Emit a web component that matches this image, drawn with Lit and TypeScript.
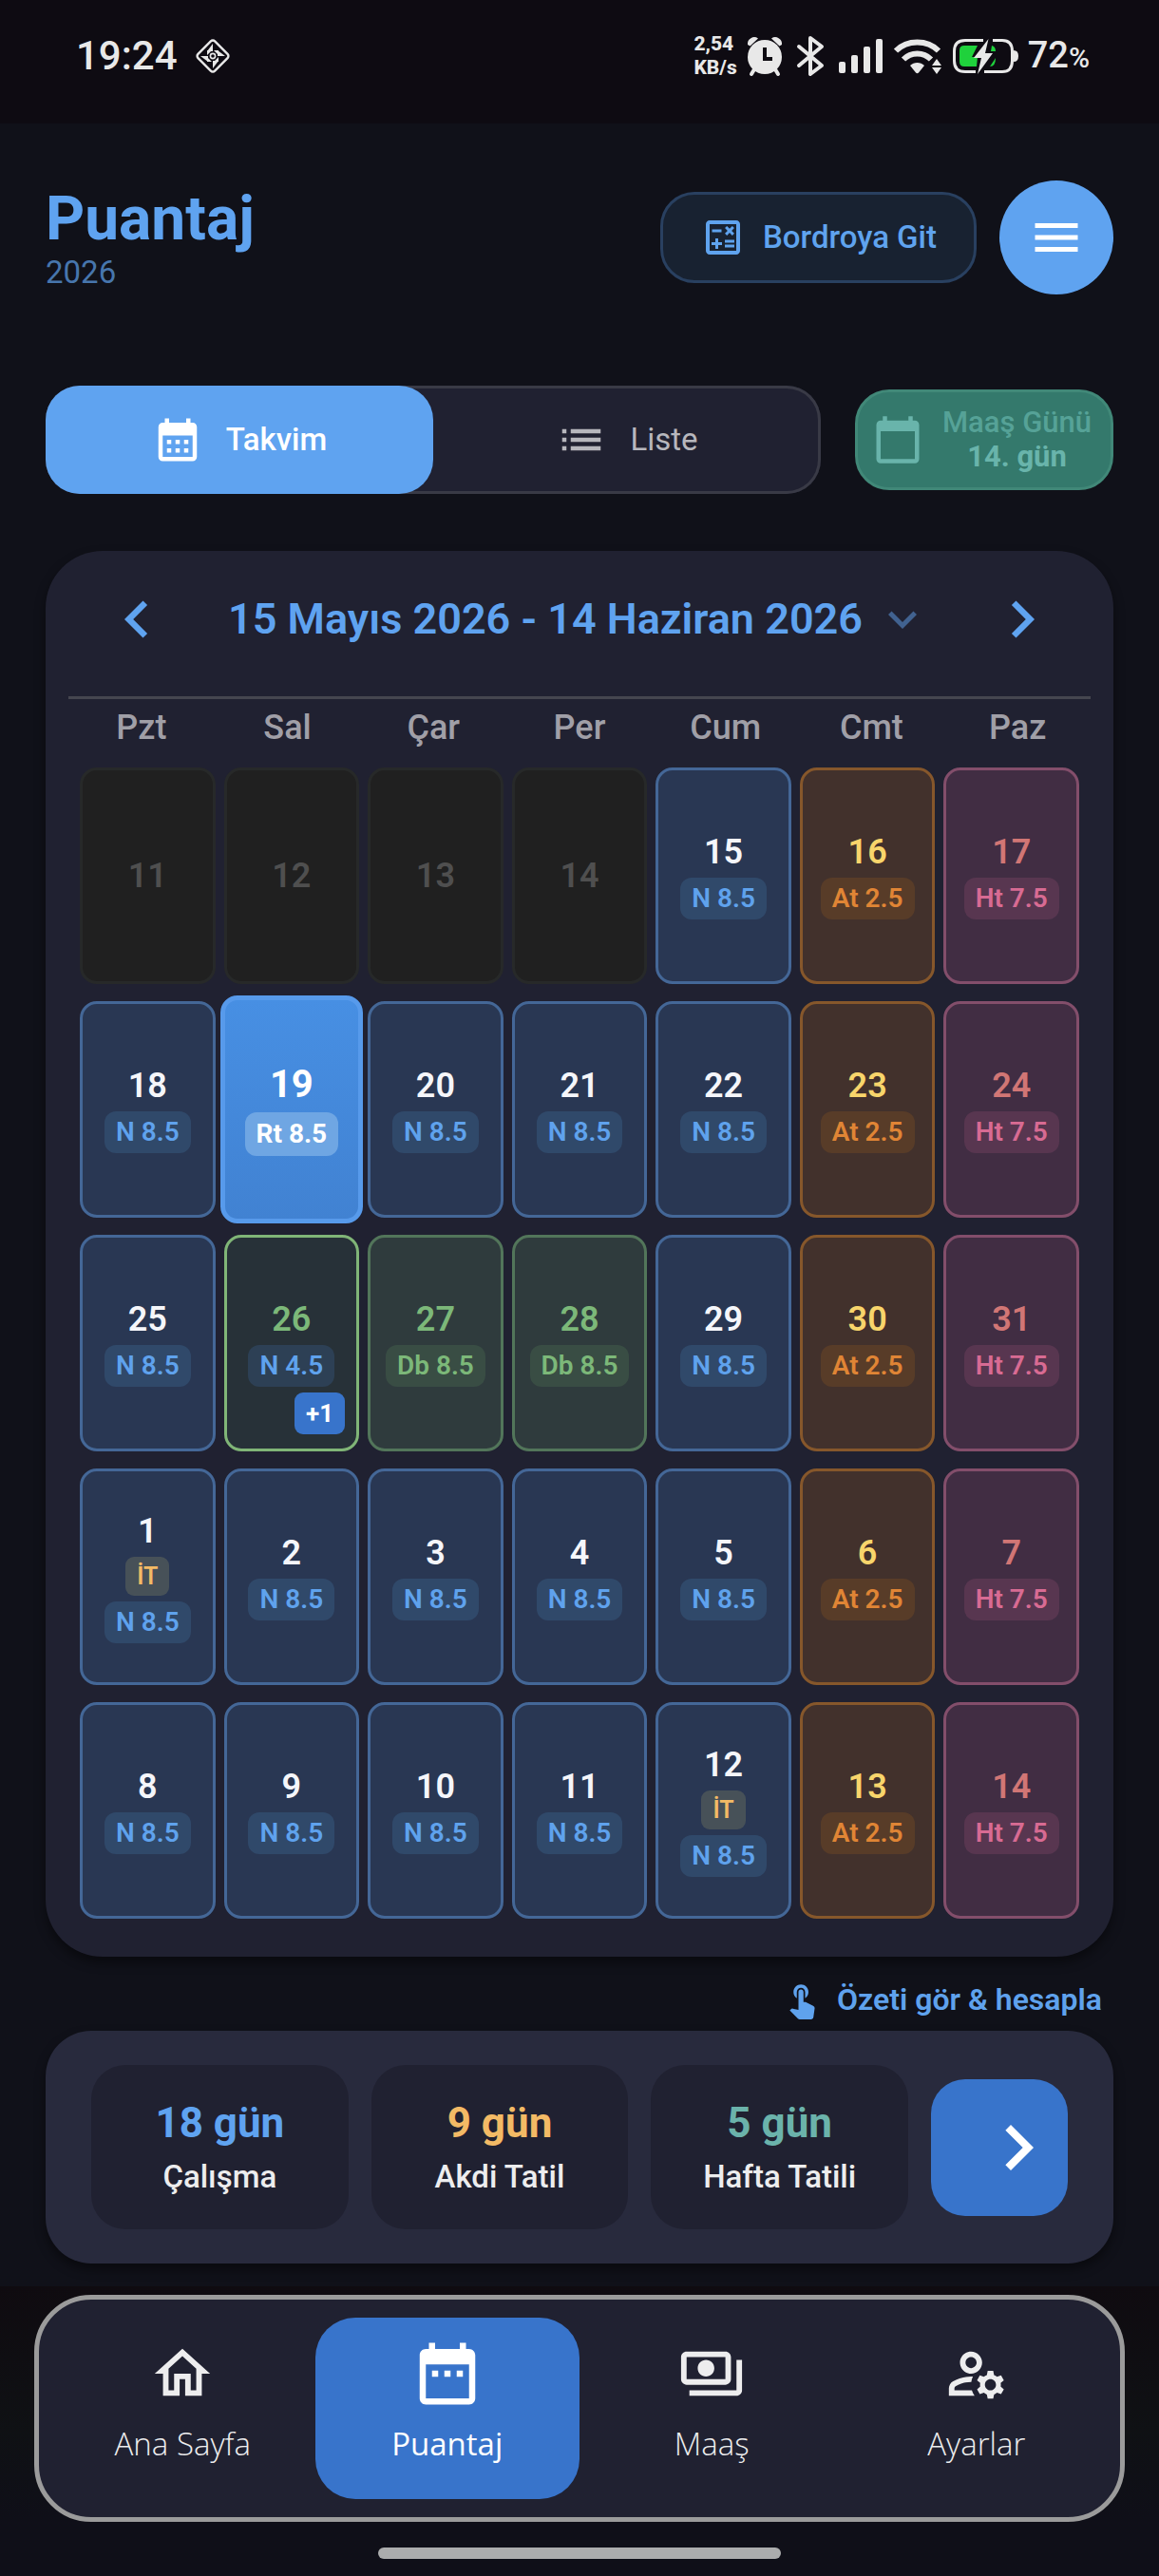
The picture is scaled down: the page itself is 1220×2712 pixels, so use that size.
import { LitElement, html, css, nothing } from "lit";
import { customElement, property, state } from "lit/decorators.js";
import { classMap } from "lit/directives/class-map.js";

type Kind = "off" | "work" | "saturday" | "sunday" | "holiday" | "half" | "today";

interface Day {
  day: number;
  kind: Kind;
  tag?: string;
  note?: string;
  extra?: string;
}

const ICONS: Record<string, string> = {
  calculate:
    "M19 3H5c-1.1 0-2 .9-2 2v14c0 1.1.9 2 2 2h14c1.1 0 2-.9 2-2V5c0-1.1-.9-2-2-2zm0 16H5V5h14v14z M6.25 7.72h5v1.5h-5z M13 15.75h5v1.5h-5z M13 13.25h5v1.5h-5z M8 18h1.5v-2h2v-1.5h-2v-2H8v2H6V16h2z M14.09 10.95l1.41-1.41 1.41 1.41 1.06-1.06-1.41-1.42 1.41-1.41L16.91 6 15.5 7.41 14.09 6l-1.06 1.06 1.41 1.41-1.41 1.42z",
  menu: "M3 18h18v-2H3v2zm0-5h18v-2H3v2zm0-7v2h18V6H3z",
  month:
    "M19 4h-1V2h-2v2H8V2H6v2H5c-1.11 0-1.99.9-1.99 2L3 20a2 2 0 0 0 2 2h14c1.1 0 2-.9 2-2V6c0-1.1-.9-2-2-2zm0 16H5V10h14v10zM9 14H7v-2h2v2zm4 0h-2v-2h2v2zm4 0h-2v-2h2v2zm-8 4H7v-2h2v2zm4 0h-2v-2h2v2zm4 0h-2v-2h2v2z",
  list: "M3 13h2v-2H3v2zm0 4h2v-2H3v2zm0-8h2V7H3v2zm4 4h14v-2H7v2zm0 4h14v-2H7v2zM7 7v2h14V7H7z",
  today:
    "M20 3h-1V1h-2v2H7V1H5v2H4c-1.1 0-2 .9-2 2v16c0 1.1.9 2 2 2h16c1.1 0 2-.9 2-2V5c0-1.1-.9-2-2-2zm0 18H4V8h16v13z",
  left: "M15.41 7.41L14 6l-6 6 6 6 1.41-1.41L10.83 12z",
  right: "M10 6L8.59 7.41 13.17 12l-4.58 4.59L10 18l6-6z",
  down: "M16.59 8.59L12 13.17 7.41 8.59 6 10l6 6 6-6z",
  touch:
    "M9 11.24V7.5C9 6.12 10.12 5 11.5 5S14 6.12 14 7.5v3.74c1.21-.81 2-2.18 2-3.74C16 5.01 13.99 3 11.5 3S7 5.01 7 7.5c0 1.56.79 2.93 2 3.74zm9.84 4.63l-4.54-2.26c-.17-.07-.35-.11-.54-.11H13v-6c0-.83-.67-1.5-1.5-1.5S10 6.67 10 7.5v10.74l-3.43-.72c-.08-.01-.15-.03-.24-.03-.31 0-.59.13-.79.33l-.79.8 4.94 4.94c.27.27.65.44 1.06.44h6.79c.75 0 1.33-.55 1.44-1.28l.75-5.27c.01-.07.02-.14.02-.2 0-.62-.38-1.16-.91-1.38z",
  home: "M12 5.69l5 4.5V18h-2v-6H9v6H7v-7.81l5-4.5M12 3L2 12h3v8h6v-6h2v6h6v-8h3L12 3z",
  range:
    "M9 11H7v2h2v-2zm4 0h-2v2h2v-2zm4 0h-2v2h2v-2zm2-7h-1V2h-2v2H8V2H6v2H5c-1.11 0-1.99.9-1.99 2L3 20c0 1.1.89 2 2 2h14c1.1 0 2-.9 2-2V6c0-1.1-.9-2-2-2zm0 16H5V9h14v11z",
  payments:
    "M19 14V6c0-1.1-.9-2-2-2H3c-1.1 0-2 .9-2 2v8c0 1.1.9 2 2 2h14c1.1 0 2-.9 2-2zm-2 0H3V6h14v8zm-7-7c-1.66 0-3 1.34-3 3s1.34 3 3 3 3-1.34 3-3-1.34-3-3-3zm13 0v11c0 1.1-.9 2-2 2H4v-2h17V7h2z",
  account:
    "M4 18v-.65c0-.34.16-.66.41-.81C6.1 15.53 8.03 15 10 15c.03 0 .05 0 .08.01.1-.7.3-1.37.59-1.98-.22-.02-.44-.03-.67-.03-2.42 0-4.68.67-6.61 1.82-.88.52-1.39 1.5-1.39 2.53V20h9.26c-.42-.6-.75-1.28-.97-2H4z M10 12c2.21 0 4-1.79 4-4s-1.79-4-4-4C7.79 4 6 5.79 6 8s1.79 4 4 4zm0-6c1.1 0 2 .9 2 2s-.9 2-2 2-2-.9-2-2 .9-2 2-2z M20.75 16c0-.22-.03-.42-.06-.63l1.14-1.01-1-1.73-1.45.49c-.32-.27-.68-.48-1.08-.63L18 11h-2l-.3 1.49c-.4.15-.76.36-1.08.63l-1.45-.49-1 1.73 1.14 1.01c-.03.21-.06.41-.06.63s.03.42.06.63l-1.14 1.01 1 1.73 1.45-.49c.32.27.68.48 1.08.63L16 21h2l.3-1.49c.4-.15.76-.36 1.08-.63l1.45.49 1-1.73-1.14-1.01c.03-.21.06-.41.06-.63zM17 18c-1.1 0-2-.9-2-2s.9-2 2-2 2 .9 2 2-.9 2-2 2z",
};

const icon = (name: string, cls: string) =>
  html`<svg class="icon ${cls}" viewBox="0 0 24 24" aria-hidden="true"><path d=${ICONS[name]}></path></svg>`;

const FONT = css`
  :host {
    font-family: Roboto, "Liberation Sans", sans-serif;
  }
  * {
    box-sizing: border-box;
  }
  button {
    font: inherit;
    color: inherit;
    background: none;
    border: 0;
    margin: 0;
    padding: 0;
    cursor: pointer;
  }
  a {
    color: inherit;
    text-decoration: none;
  }
  svg {
    display: block;
    flex: none;
  }
  .icon {
    fill: currentColor;
  }
`;

@customElement("status-bar")
export class StatusBar extends LitElement {
  static styles = [
    FONT,
    css`
      :host {
        display: flex;
        align-items: center;
        height: 130px;
        padding: 0 73px 12px 80px;
        background: #0e0b12;
        color: #e8e8e8;
      }
      .time {
        font-size: 42px;
        line-height: 48px;
        font-weight: 500;
        margin-right: 18px;
      }
      .rate {
        margin-left: auto;
        font-size: 21px;
        line-height: 25px;
        font-weight: 800;
        margin-right: 10px;
      }
      .system {
        display: flex;
        align-items: center;
        gap: 10px;
      }
      .battery {
        font-size: 38px;
        line-height: 44px;
        font-weight: 500;
      }
      .percent {
        font-size: 30px;
      }
    `,
  ];

  render() {
    return html`
      <span class="time">19:24</span>
      <svg width="38" height="38" viewBox="0 0 38 38" fill="none" stroke="#e8e8e8" aria-hidden="true">
        <rect x="6.500" y="6.500" width="25" height="25" rx="3" stroke-width="2.400" transform="rotate(45 19 19)"></rect>
        <g fill="#e8e8e8" stroke="none">
          <path d="M19 6v8h-6zM32 19h-8v-6zM19 32v-8h6zM6 19h8v6z"></path>
          <path d="M20 13h5v5zM25 20v5h-5zM18 25h-5v-5zM13 18v-5h5z"></path>
        </g>
        <circle cx="19" cy="19" r="2.600" stroke-width="1.600"></circle>
      </svg>
      <span class="rate">2,54<br />KB/s</span>
      <div class="system">
        <svg width="38" height="44" viewBox="0 0 38 44" aria-hidden="true">
          <g stroke="#e8e8e8" stroke-width="4" stroke-linecap="round">
            <path d="M8 36l-3 5M30 36l3 5"></path>
          </g>
          <path fill="#e8e8e8" d="M1 10A7 7 0 0 1 12 3.500L3.500 11.500zM37 10A7 7 0 0 0 26 3.500L34.500 11.500z"></path>
          <circle cx="19" cy="23" r="18" fill="#e8e8e8"></circle>
          <path d="M19 13v12h8" fill="none" stroke="#0e0b12" stroke-width="4"></path>
        </svg>
        <svg width="38" height="44" viewBox="0 0 38 44" aria-hidden="true">
          <path
            d="M7 12l24 20-12 9V3l12 9L7 32"
            fill="none"
            stroke="#e8e8e8"
            stroke-width="4"
            stroke-linejoin="round"
            stroke-linecap="round"
          ></path>
        </svg>
        <svg width="48" height="38" viewBox="0 0 48 38" fill="#e8e8e8" aria-hidden="true">
          <rect x="1" y="25" width="7" height="12" rx="2"></rect>
          <rect x="14" y="18" width="7" height="19" rx="2"></rect>
          <rect x="27" y="9" width="7" height="28" rx="2"></rect>
          <rect x="40" y="1" width="7" height="36" rx="2"></rect>
        </svg>
        <svg width="52" height="38" viewBox="0 0 52 38" aria-hidden="true">
          <g fill="none" stroke="#e8e8e8" stroke-width="6">
            <path d="M3 13.500C15 1.500 36 1.500 48 13.500"></path>
            <path d="M11 22.500C19 14.500 32 14.500 40 22.500"></path>
          </g>
          <path fill="#e8e8e8" d="M18 29c4-4 11-4 15 0l-6 7.500q-1.500 1.500-3 0z"></path>
          <path fill="#e8e8e8" d="M46 22l5 7H41zM46 38l5-7H41z"></path>
        </svg>
        <svg width="70" height="38" viewBox="0 0 70 38" aria-hidden="true">
          <path fill="#1fd13c" d="M13 8h14l-6 12h6l-1 10H13q-5 0-5-5V13q0-5 5-5z"></path>
          <path fill="#1fd13c" d="M42 8q4 1 4 6l-5 0zM40 30q6 0 6-9z"></path>
          <g fill="none" stroke="#e8e8e8" stroke-width="3">
            <path d="M33 2.500H14Q2.500 2.500 2.500 14v10Q2.500 35.500 14 35.500H25"></path>
            <path d="M43 2.500H53Q63.500 2.500 63.500 14v10Q63.500 35.500 53 35.500H34"></path>
          </g>
          <path fill="#e8e8e8" d="M65 13q5 0 5 6t-5 6z"></path>
          <path fill="#e8e8e8" d="M38.500 1L23 21h8l-4 17 16-22h-8z"></path>
        </svg>
        <span class="battery">72<span class="percent">%</span></span>
      </div>
    `;
  }
}

@customElement("day-cell")
export class DayCell extends LitElement {
  @property({ attribute: false }) data!: Day;

  static styles = [
    FONT,
    css`
      :host {
        display: flex;
        min-width: 0;
      }
      .cell {
        position: relative;
        flex: 1;
        min-width: 0;
        display: flex;
        flex-direction: column;
        align-items: center;
        justify-content: center;
        gap: 6px;
        border: 3px solid #446797;
        border-radius: 18px;
        background: #293753;
      }
      .number {
        font-size: 36px;
        line-height: 42px;
        font-weight: 600;
        color: #f5f6fa;
      }
      .tag {
        padding: 0 12px;
        border-radius: 12px;
        font-size: 28px;
        line-height: 44px;
        font-weight: 600;
        white-space: nowrap;
        color: #5fa2ed;
        background: #30496a;
      }
      .note {
        padding: 0 12px;
        border-radius: 9px;
        font-size: 25px;
        line-height: 41px;
        font-weight: 600;
        color: #f3ba65;
        background: #475158;
      }
      .extra {
        position: absolute;
        right: 12px;
        bottom: 15px;
        padding: 0 12px;
        border-radius: 9px;
        font-size: 26px;
        line-height: 44px;
        font-weight: 700;
        color: #ffffff;
        background: #3874cb;
      }
      .off {
        background: #202020;
        border-color: #272929;
      }
      .off .number {
        color: #4f4f4f;
      }
      .saturday {
        background: #42312c;
        border-color: #86572b;
      }
      .saturday .number {
        color: #f8d56b;
      }
      .saturday .tag {
        color: #e08535;
        background: #583c28;
      }
      .sunday {
        background: #412d43;
        border-color: #834e6b;
      }
      .sunday .number {
        color: #d17675;
      }
      .sunday .tag {
        color: #d86b93;
        background: #583650;
      }
      .holiday {
        background: #2f3b3d;
        border-color: #52755a;
      }
      .holiday .number,
      .half .number {
        color: #7cb879;
      }
      .holiday .tag {
        color: #7cb879;
        background: #394d44;
      }
      .half {
        background: #273138;
        border-color: #80b577;
      }
      .half .tag {
        background: #2d4055;
      }
      .today {
        margin: -6px -4px;
        border-width: 5px;
        border-color: #579aeb;
        background: linear-gradient(#478fe3, #4182d2);
      }
      .today .number {
        font-size: 40px;
        line-height: 46px;
        font-weight: 700;
        color: #ffffff;
      }
      .today .tag {
        font-weight: 700;
        line-height: 46px;
        color: #ffffff;
        background: #6fa6e3;
      }
    `,
  ];

  render() {
    const { day, kind, tag, note, extra } = this.data;
    return html`<button class="cell ${kind}" ?disabled=${kind === "off"}>
      <span class="number">${day}</span>
      ${note ? html`<span class="note">${note}</span>` : nothing}
      ${tag ? html`<span class="tag">${tag}</span>` : nothing}
      ${extra ? html`<span class="extra">${extra}</span>` : nothing}
    </button>`;
  }
}

const WEEKDAYS = ["Pzt", "Sal", "Çar", "Per", "Cum", "Cmt", "Paz"];

const SPECIAL: Record<number, Partial<Day>> = {
  8: { kind: "today", tag: "Rt 8.5" },
  15: { kind: "half", tag: "N 4.5", extra: "+1" },
  16: { kind: "holiday", tag: "Db 8.5" },
  17: { kind: "holiday", tag: "Db 8.5" },
  21: { note: "İT" },
  32: { note: "İT" },
};

/** Five weeks starting on Monday 11 May; the period opens on the 15th. */
function buildDays(): Day[] {
  return Array.from({ length: 35 }, (_, i) => {
    const day = i < 21 ? 11 + i : i - 20;
    if (i < 4) return { day, kind: "off" as Kind };
    const weekday = i % 7;
    const base: Day =
      weekday === 5
        ? { day, kind: "saturday", tag: "At 2.5" }
        : weekday === 6
          ? { day, kind: "sunday", tag: "Ht 7.5" }
          : { day, kind: "work", tag: "N 8.5" };
    return { ...base, ...SPECIAL[i] };
  });
}

@customElement("app-root")
export class AppRoot extends LitElement {
  @state() private view = "calendar";

  private days = buildDays();

  static styles = [
    FONT,
    css`
      :host {
        display: flex;
        flex-direction: column;
        min-height: 100vh;
        background: #101119;
        color: #ededee;
      }
      main {
        display: flex;
        flex-direction: column;
        padding: 60px 48px 24px;
      }
      .header {
        display: flex;
        align-items: center;
        gap: 24px;
        margin-bottom: 96px;
      }
      .heading {
        margin-right: auto;
      }
      h1 {
        margin: 0;
        font-size: 64px;
        line-height: 74px;
        font-weight: 700;
        color: #5fa3f0;
      }
      .year {
        margin: 0;
        font-size: 33px;
        line-height: 38px;
        color: #4776ad;
      }
      .payroll {
        display: flex;
        align-items: center;
        justify-content: center;
        gap: 18px;
        min-width: 333px;
        height: 96px;
        padding: 0 33px;
        border: 3px solid #294060;
        border-radius: 36px;
        background: #182231;
        color: #5fa3ee;
        font-size: 33px;
        line-height: 38px;
        font-weight: 500;
      }
      .menu {
        display: grid;
        place-items: center;
        width: 120px;
        height: 120px;
        border-radius: 50%;
        background: #5fa3f0;
        color: #ffffff;
      }
      .i42 {
        width: 42px;
        height: 42px;
      }
      .i48 {
        width: 48px;
        height: 48px;
      }
      .i54 {
        width: 54px;
        height: 54px;
      }
      .i60 {
        width: 60px;
        height: 60px;
      }
      .i70 {
        width: 70px;
        height: 70px;
      }
      .i78 {
        width: 78px;
        height: 78px;
      }
      .i96 {
        width: 96px;
        height: 96px;
      }
      .toolbar {
        display: grid;
        grid-template-columns: 3fr 1fr;
        align-items: center;
        gap: 36px;
        margin-bottom: 60px;
      }
      .tabs {
        display: grid;
        grid-template-columns: 1fr 1fr;
        height: 114px;
        border-radius: 36px;
        background: #202131;
        box-shadow: inset 0 0 0 3px #393a46;
      }
      .tab {
        display: flex;
        align-items: center;
        justify-content: center;
        gap: 24px;
        border-radius: 36px;
        font-size: 33px;
        line-height: 38px;
        color: #b7b7bd;
      }
      .tab.active {
        background: #5fa3f0;
        color: #ffffff;
        font-weight: 500;
      }
      .payday {
        display: flex;
        align-items: center;
        gap: 12px;
        height: 106px;
        padding: 0 12px 0 15px;
        border: 3px solid #418878;
        border-radius: 36px;
        background: #34796c;
        color: #69b4ab;
        font-size: 31px;
        line-height: 36px;
        font-weight: 700;
      }
      .payday-text {
        flex: 1;
        text-align: center;
        white-space: nowrap;
      }
      .payday-label {
        display: block;
        font-weight: 500;
        color: #56a297;
      }
      .card {
        padding: 33px 24px 40px;
        border-radius: 60px;
        background: #202131;
        box-shadow: 0 6px 12px rgba(0, 0, 0, 0.45);
      }
      .period {
        display: flex;
        align-items: center;
        justify-content: space-between;
        padding: 0 33px 42px;
        border-bottom: 3px solid #45464f;
        color: #5fa3f0;
      }
      .range {
        display: flex;
        align-items: center;
        gap: 12px;
        font-size: 45px;
        line-height: 54px;
        font-weight: 600;
        white-space: nowrap;
      }
      .fade {
        color: #416290;
      }
      .weekdays {
        display: grid;
        grid-template-columns: repeat(7, 1fr);
        padding: 9px 0 21px;
        text-align: center;
        font-size: 36px;
        line-height: 42px;
        font-weight: 500;
        color: #a09fa7;
      }
      .grid {
        display: grid;
        grid-template-columns: repeat(7, minmax(0, 1fr));
        grid-auto-rows: 228px;
        gap: 18px 9px;
        padding: 0 12px;
      }
      .hint {
        display: flex;
        align-items: center;
        align-self: flex-end;
        gap: 16px;
        padding: 24px 12px 12px;
        font-size: 32px;
        line-height: 42px;
        font-weight: 600;
        color: #5fa2ed;
      }
      .summary {
        display: grid;
        grid-template-columns: 1fr 1fr 1fr 144px;
        align-items: center;
        gap: 24px;
        padding: 36px 48px;
        border-radius: 48px;
        background: #282a3d;
        box-shadow: 0 6px 12px rgba(0, 0, 0, 0.45);
      }
      .stat {
        display: flex;
        flex-direction: column;
        align-items: center;
        gap: 9px;
        padding: 34px 0;
        border-radius: 36px;
        background: #202131;
        font-size: 33px;
        line-height: 42px;
        font-weight: 500;
      }
      .amount {
        font-size: 44px;
        line-height: 54px;
        font-weight: 700;
      }
      .blue {
        color: #5fa3f0;
      }
      .amber {
        color: #f3ba65;
      }
      .teal {
        color: #6bb3ab;
      }
      .next {
        display: flex;
        justify-content: flex-end;
        align-items: center;
        height: 144px;
        padding-right: 4px;
        border-radius: 36px;
        background: #3874cb;
        color: #ffffff;
      }
      .dock {
        flex: 1;
        display: flex;
        flex-direction: column;
        align-items: center;
        padding: 9px 36px 18px;
        background: linear-gradient(#0f0b10, #0f1114 50%, #0f0f18 80%);
      }
      nav {
        align-self: stretch;
        display: grid;
        grid-template-columns: repeat(4, 1fr);
        padding: 19px 12px;
        border: 5px solid #9b9b9b;
        border-radius: 60px;
        background: #202131;
      }
      .link {
        display: flex;
        flex-direction: column;
        align-items: center;
        height: 191px;
        padding-top: 20px;
        border-radius: 42px;
        font-family: "Open Sans", "Noto Sans", sans-serif;
        font-size: 33px;
        line-height: 42px;
        font-weight: 300;
      }
      .glyph {
        display: grid;
        place-items: center;
        height: 78px;
        margin-bottom: 14px;
      }
      .link.current {
        background: #3874cb;
        color: #ffffff;
        font-weight: 400;
      }
      .handle {
        width: 37%;
        height: 12px;
        margin-top: 27px;
        border-radius: 6px;
        background: #abacad;
      }
    `,
  ];

  private tab(id: string, label: string, glyph: string) {
    const active = this.view === id;
    return html`<button
      class=${classMap({ tab: true, active })}
      aria-pressed=${active ? "true" : "false"}
      @click=${() => (this.view = id)}
    >
      ${icon(glyph, "i54")}<span>${label}</span>
    </button>`;
  }

  private stat(amount: string, label: string, tone: string) {
    return html`<div class="stat"><span class="amount ${tone}">${amount}</span><span>${label}</span></div>`;
  }

  private link(label: string, glyph: string, current = false) {
    return html`<a class=${classMap({ link: true, current })} href="#${glyph}">
      <span class="glyph">${icon(glyph, current ? "i78" : "i70")}</span>${label}
    </a>`;
  }

  render() {
    return html`
      <status-bar></status-bar>
      <main>
        <header class="header">
          <div class="heading">
            <h1>Puantaj</h1>
            <p class="year">2026</p>
          </div>
          <button class="payroll">${icon("calculate", "i48")}<span>Bordroya Git</span></button>
          <button class="menu" aria-label="Menü">${icon("menu", "i60")}</button>
        </header>

        <div class="toolbar">
          <div class="tabs">
            ${this.tab("calendar", "Takvim", "month")} ${this.tab("list", "Liste", "list")}
          </div>
          <button class="payday">
            ${icon("today", "i54")}
            <span class="payday-text"><span class="payday-label">Maaş Günü</span>14. gün</span>
          </button>
        </div>

        <section class="card">
          <div class="period">
            <button aria-label="Önceki dönem">${icon("left", "i78")}</button>
            <button class="range">15 Mayıs 2026 - 14 Haziran 2026 ${icon("down", "i60 fade")}</button>
            <button aria-label="Sonraki dönem">${icon("right", "i78")}</button>
          </div>
          <div class="weekdays">${WEEKDAYS.map((name) => html`<span>${name}</span>`)}</div>
          <div class="grid">${this.days.map((d) => html`<day-cell .data=${d}></day-cell>`)}</div>
        </section>

        <button class="hint">${icon("touch", "i42")}<span>Özeti gör &amp; hesapla</span></button>

        <section class="summary">
          ${this.stat("18 gün", "Çalışma", "blue")} ${this.stat("9 gün", "Akdi Tatil", "amber")}
          ${this.stat("5 gün", "Hafta Tatili", "teal")}
          <button class="next" aria-label="Özet">${icon("right", "i96")}</button>
        </section>
      </main>

      <div class="dock">
        <nav>
          ${this.link("Ana Sayfa", "home")} ${this.link("Puantaj", "range", true)}
          ${this.link("Maaş", "payments")} ${this.link("Ayarlar", "account")}
        </nav>
        <div class="handle"></div>
      </div>
    `;
  }
}
